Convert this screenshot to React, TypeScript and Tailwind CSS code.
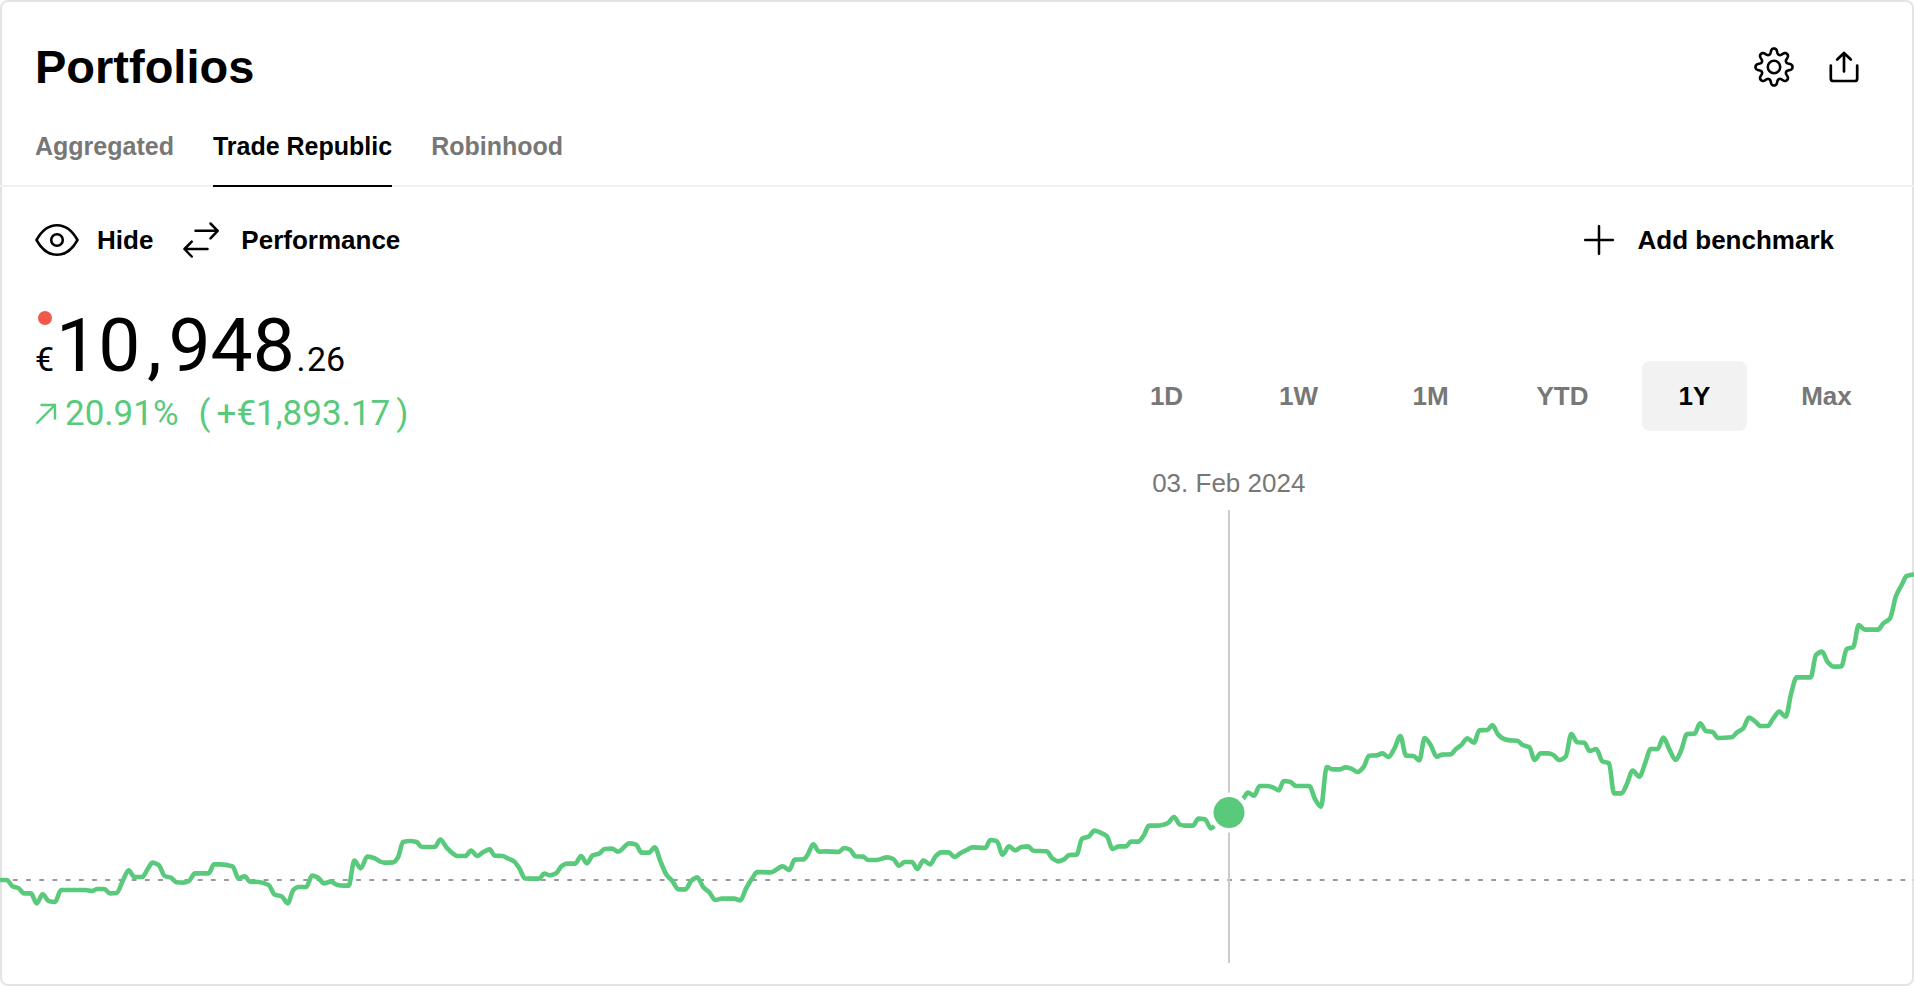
type Segment = { x: number; y: number; points: number[][] };

// Chart samples, three units per pixel, relative to the corner of each segment
const segments: Segment[] = [
  {
    x: 0, y: 800,
    points: [
      [0, 240], [20, 240], [38, 259], [55, 264], [72, 280], [93, 280], [110, 310], [128, 283], [146, 303], [165, 306],
      [183, 270], [255, 270], [276, 273], [292, 267], [313, 267], [330, 280], [350, 279], [368, 243], [386, 211], [403, 231],
      [427, 231], [443, 207], [458, 188], [476, 195], [494, 228], [513, 233], [530, 247], [550, 248], [567, 243], [585, 220],
      [626, 220], [642, 193], [660, 193], [698, 199], [715, 235], [734, 229], [750, 245], [775, 246], [806, 255], [824, 284],
      [845, 289], [863, 310], [880, 270], [895, 261], [919, 261], [936, 227], [953, 232], [972, 250], [992, 245], [1010, 254],
      [1030, 257], [1046, 257], [1063, 182], [1082, 205],
    ],
  },
  {
    x: 350, y: 800,
    points: [
      [52, 170], [70, 173], [90, 184], [102, 188], [130, 187], [144, 172], [159, 126], [180, 123], [200, 126], [215, 141],
      [254, 141], [271, 119], [290, 143], [308, 160], [322, 168], [346, 168], [363, 152], [382, 168], [400, 156], [419, 148],
      [434, 167], [457, 168], [475, 176], [492, 184], [508, 205], [525, 235], [567, 236], [583, 221], [600, 226], [618, 220],
      [636, 197], [652, 191], [676, 191], [693, 168], [711, 190], [728, 166], [747, 161], [764, 147], [786, 146], [804, 155],
      [838, 130], [858, 134], [875, 158], [897, 158], [914, 142], [932, 186], [950, 225], [967, 243], [985, 268], [1007, 268],
      [1024, 242], [1042, 232], [1060, 262], [1078, 277], [1096, 300], [1115, 296], [1152, 296], [1171, 301], [1188, 266], [1206, 236],
    ],
  },
  {
    x: 750, y: 780,
    points: [
      [22, 276], [62, 277], [98, 259], [118, 270], [134, 239], [160, 238], [172, 226], [190, 193], [207, 215], [228, 214],
      [266, 216], [282, 204], [300, 209], [317, 229], [339, 230], [355, 240], [380, 240], [412, 232], [430, 237], [447, 257],
      [464, 246], [486, 246], [502, 267], [520, 242], [541, 253], [556, 230], [573, 217], [596, 217], [613, 231], [632, 219],
      [650, 210], [667, 202], [706, 204], [721, 180], [741, 184], [758, 224], [777, 199], [796, 211], [814, 201], [834, 199],
      [850, 212], [890, 214], [907, 235], [925, 244], [942, 238], [958, 225], [980, 224], [996, 176], [1016, 170], [1033, 152],
      [1052, 158], [1070, 168], [1088, 207], [1106, 199], [1128, 199],
    ],
  },
  {
    x: 1130, y: 700,
    points: [
      [3, 425], [24, 425], [42, 405], [57, 377], [80, 377], [97, 375], [114, 369], [132, 351], [150, 374], [166, 377],
      [189, 377], [205, 356], [225, 358], [243, 385], [260, 370], [297, 338], [340, 295], [354, 278], [372, 287], [389, 258],
      [412, 258], [430, 263], [446, 271], [461, 243], [480, 245], [498, 258], [538, 258], [555, 297], [573, 320], [590, 201],
      [608, 208], [630, 208], [647, 202], [664, 206], [683, 216], [701, 201], [717, 167], [740, 166], [757, 160], [775, 171],
      [793, 146], [811, 108], [828, 167], [850, 168], [868, 181], [884, 114], [902, 135], [920, 170], [937, 164], [962, 163],
      [977, 148], [995, 134], [1012, 115], [1032, 128], [1048, 91], [1072, 90], [1087, 75], [1104, 103],
    ],
  },
  {
    x: 1500, y: 540,
    points: [
      [12, 597], [30, 601], [52, 602], [68, 615], [88, 622], [104, 660], [122, 640], [145, 640], [160, 645], [178, 660],
      [197, 650], [214, 582], [232, 607], [253, 608], [269, 633], [289, 627], [307, 664], [327, 670], [342, 760], [365, 760],
      [381, 731], [398, 692], [418, 710], [436, 668], [452, 627], [473, 627], [490, 593], [508, 628], [527, 660], [544, 630],
      [561, 582], [584, 581], [600, 550], [618, 573], [638, 576], [654, 594], [695, 592], [711, 577], [729, 566], [747, 533],
      [765, 544], [782, 558], [803, 558], [820, 535], [838, 515], [857, 530], [874, 458], [890, 412], [932, 412], [948, 345],
      [966, 335], [983, 366], [1000, 380], [1024, 379], [1040, 327], [1060, 321], [1076, 255], [1095, 269], [1134, 269], [1150, 250],
      [1170, 235], [1188, 168], [1205, 135], [1220, 108], [1242, 103],
    ],
  },
];

const samples = segments.flatMap((s) => s.points.map(([x, y]) => [s.x + x / 3, s.y + y / 3]));

// Monotone cubic curve, so that flat runs stay flat and peaks don't overshoot
function smoothPath(p: number[][]) {
  const slope = (i: number) => (p[i + 1][1] - p[i][1]) / (p[i + 1][0] - p[i][0]);
  const tangents = p.map((_, i) => {
    if (i === 0) return slope(0);
    if (i === p.length - 1) return slope(i - 1);
    const a = slope(i - 1);
    const b = slope(i);
    return a * b <= 0 ? 0 : (2 * a * b) / (a + b);
  });
  let d = `M${p[0][0]} ${p[0][1]}`;
  for (let i = 1; i < p.length; i++) {
    const h = (p[i][0] - p[i - 1][0]) / 3;
    d += `C${p[i - 1][0] + h} ${p[i - 1][1] + tangents[i - 1] * h} ${p[i][0] - h} ${p[i][1] - tangents[i] * h} ${p[i][0]} ${p[i][1]}`;
  }
  return d;
}

// Eight rounded teeth
function gearPath() {
  let d = "";
  for (let i = 0; i < 240; i++) {
    const a = (i / 240) * Math.PI * 2;
    const r = 15.8 + 2.7 * (Math.tanh(1.3 * Math.cos(8 * a)) / Math.tanh(1.3));
    d += `${i ? "L" : "M"}${(20 + r * Math.cos(a)).toFixed(2)} ${(20 + r * Math.sin(a)).toFixed(2)}`;
  }
  return d + "Z";
}

const linePath = smoothPath(samples);
const tabs = ["Aggregated", "Trade Republic", "Robinhood"];
const ranges = ["1D", "1W", "1M", "YTD", "1Y", "Max"];

const GearIcon = () => (
  <svg className="size-10" viewBox="0 0 40 40" fill="none" stroke="currentColor" strokeWidth="2.6" strokeLinejoin="round">
    <path d={gearPath()} />
    <circle cx="20" cy="20" r="6.2" />
  </svg>
);

const ShareIcon = () => (
  <svg className="size-10" viewBox="0 0 40 40" fill="none" stroke="currentColor" strokeWidth="2.7" strokeLinecap="round" strokeLinejoin="round">
    <path d="M6.8 18.5V31.400q0 2.600 2.600 2.600h21.200q2.600 0 2.600-2.600V18.500" />
    <path d="M20 24.500V6M13.200 12.500 20 6l6.800 6.500" />
  </svg>
);

const EyeIcon = () => (
  <svg className="h-9 w-11" viewBox="0 0 44 36" fill="none" stroke="currentColor" strokeWidth="2.6" strokeLinejoin="round">
    <path d="M1.500 18C7 8 14 3.200 22 3.200S37 8 42.500 18C37 28 30 32.800 22 32.800S7 28 1.500 18Z" />
    <circle cx="22" cy="18" r="5.800" />
  </svg>
);

const SwapIcon = () => (
  <svg className="h-10 w-9" viewBox="0 0 36 40" fill="none" stroke="currentColor" strokeWidth="2.5" strokeLinecap="round" strokeLinejoin="round">
    <path d="M12.500 10.800h22M27.500 3.500l7.200 7.300-7.200 7.500" />
    <path d="M24.500 29H1.500M8.700 21.700 1.500 29l7.200 7.500" />
  </svg>
);

const PlusIcon = () => (
  <svg className="size-[30px]" viewBox="0 0 30 30" fill="none" stroke="currentColor" strokeWidth="2.5" strokeLinecap="round">
    <path d="M15 1.200v27.600M1.200 15h27.600" />
  </svg>
);

export default function App() {
  return (
    <main className="min-h-screen rounded-lg bg-white font-['Liberation_Sans',Arial,sans-serif] text-black inset-ring-2 inset-ring-[#e4e4e4]">
      {/* Title */}
      <header className="flex h-[122px] items-center justify-between pt-3 pr-[50px] pl-[35px]">
        <h1 className="text-[47px] leading-[56px] font-bold">Portfolios</h1>
        <div className="flex gap-[30px]">
          <button type="button" aria-label="Settings"><GearIcon /></button>
          <button type="button" aria-label="Share"><ShareIcon /></button>
        </div>
      </header>

      {/* Portfolio tabs */}
      <nav className="flex h-[65px] gap-[39px] border-b-2 border-[#f1f1f1] px-[35px]">
        {tabs.map((tab) => (
          <button
            key={tab}
            type="button"
            className={
              tab === "Trade Republic"
                ? "-mb-[2px] border-b-2 border-black pb-[14px] text-[25px] font-bold"
                : "-mb-[2px] border-b-2 border-transparent pb-[14px] text-[25px] font-bold text-[#777]"
            }
          >
            {tab}
          </button>
        ))}
      </nav>

      {/* Actions */}
      <div className="flex items-center justify-between pt-8 pr-20 pl-[35px] text-[26px] leading-[42px] font-bold">
        <div className="flex gap-[30px]">
          <button type="button" className="flex items-center gap-[18px]"><EyeIcon />Hide</button>
          <button type="button" className="flex items-center gap-[22px]"><SwapIcon />Performance</button>
        </div>
        <button type="button" className="flex items-center gap-6"><PlusIcon />Add benchmark</button>
      </div>

      {/* Balance and range picker */}
      <section className="flex items-end justify-between px-[35px] pt-8">
        <div className="font-[Roboto,'Liberation_Sans',sans-serif]">
          <p className="flex items-baseline text-[75px] leading-[104px]">
            <span className="relative text-[34px] leading-10">
              <span className="absolute -top-7 left-[3px] size-[14px] rounded-full bg-[#f0594a]" />
              €
            </span>
            <span className="ml-[2px]">10</span>
            <span className="w-7 text-center">,</span>
            <span>948</span>
            <span className="w-3 text-center text-[34px] leading-10">.</span>
            <span className="text-[34px] leading-10">26</span>
          </p>
          <p className="flex items-center text-[35px] leading-[34px] text-[#59c97b]">
            <svg className="mr-2 size-[22px]" viewBox="0 0 22 22" fill="none" stroke="currentColor" strokeWidth="2.4">
              <path d="M1.500 20.500 20 2M5.500 2H20v14.500" />
            </svg>
            <span>20.91%</span>
            <span className="ml-5 flex gap-[6px]">
              <span>(</span>
              <span>+€1,893.17</span>
              <span>)</span>
            </span>
          </p>
        </div>
        <div className="flex gap-[27px]">
          {ranges.map((range) => (
            <button
              key={range}
              type="button"
              className={
                range === "1Y"
                  ? "h-[70px] w-[105px] rounded-lg bg-[#f2f2f2] text-[26px] font-bold"
                  : "h-[70px] w-[105px] rounded-lg text-[26px] font-bold text-[#777]"
              }
            >
              {range}
            </button>
          ))}
        </div>
      </section>

      {/* Chart */}
      <figure className="relative pt-[69px]">
        <figcaption className="absolute top-9 left-[64.2%] -translate-x-1/2 text-[26px] leading-8 whitespace-nowrap text-[#777]">
          03. Feb 2024
        </figcaption>
        <svg className="block w-full" viewBox="0 500 1914 486" fill="none">
          <path d="M0 880H1914" stroke="#999" strokeWidth="2" strokeDasharray="4.8 8.4" strokeDashoffset="0.3" />
          <path d="M1229 510V963" stroke="#ccc" strokeWidth="2" />
          <path d={linePath} stroke="#59c97b" strokeWidth="4.6" strokeLinejoin="round" />
          <circle cx="1229" cy="812.6" r="20" fill="#fff" />
          <circle cx="1229" cy="812.6" r="15.5" fill="#59c97b" />
        </svg>
      </figure>
    </main>
  );
}
